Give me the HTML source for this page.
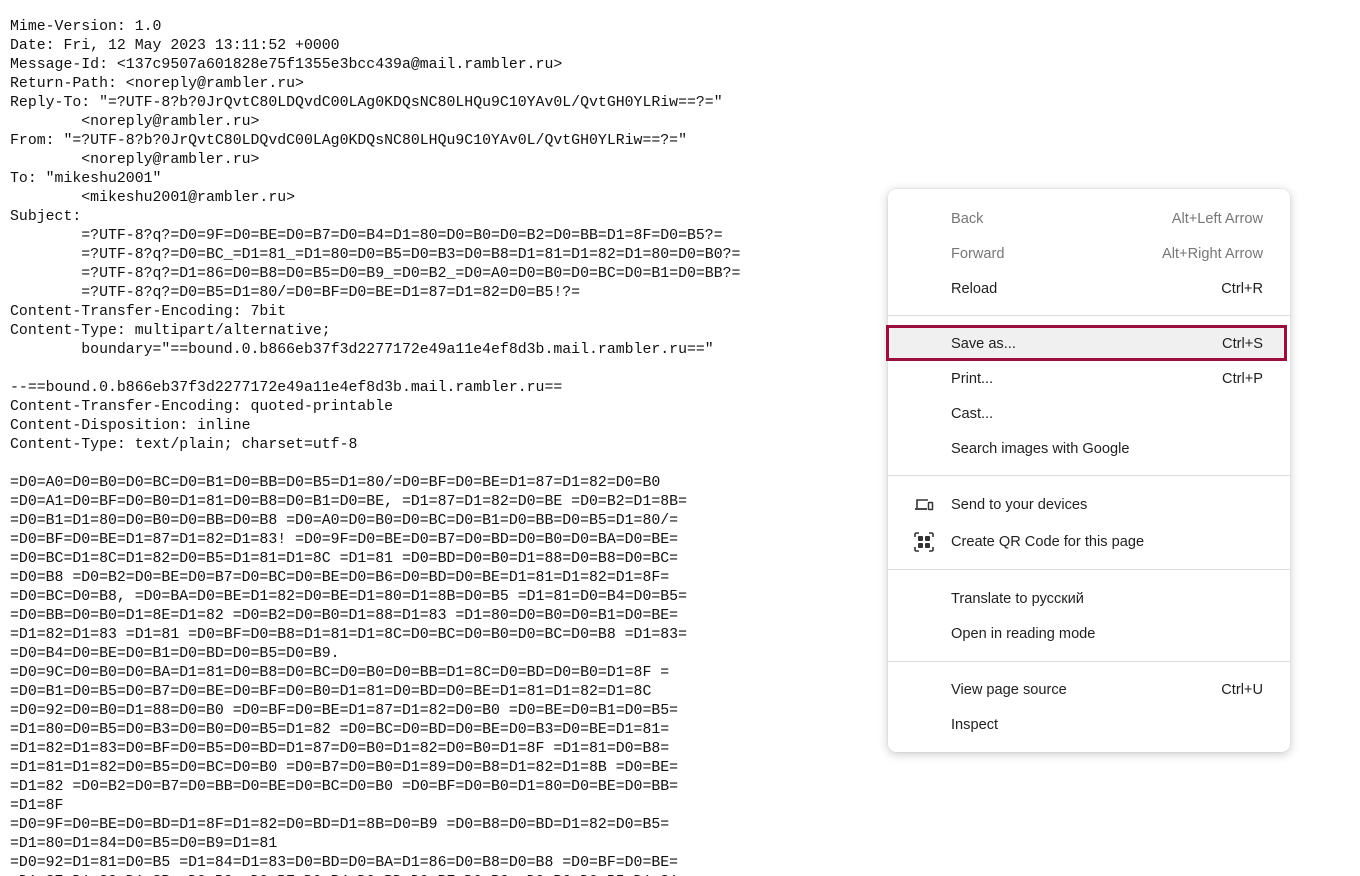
<!DOCTYPE html>
<html><head><meta charset="utf-8"><style>
html,body{margin:0;padding:0;background:#fff;width:1360px;height:876px;overflow:hidden;position:relative}
pre{margin:0;position:absolute;left:10px;top:18px;font-family:"Liberation Mono",monospace;font-size:14.85px;line-height:19px;color:#111;white-space:pre}
.menu{position:absolute;left:888px;top:189px;width:402px;height:563px;background:#fff;border-radius:8px;box-shadow:0 2px 10px rgba(0,0,0,.22),0 0 1px rgba(0,0,0,.2);font-family:"Liberation Sans",sans-serif;font-size:14.6px;color:#1f1f1f}
.it{position:absolute;left:0;width:402px;height:35px;line-height:35px;margin-top:2px}
.it .l{position:absolute;left:63px}
.it .r{position:absolute;right:27px}
.dis{color:#777}
.sep{position:absolute;left:0;width:402px;height:1px;background:#dcdcdc}
.hl{position:absolute;left:-2px;top:136px;width:395px;height:30px;background:#f0f0f0;border:3px solid #9b0f3d}
.ic{position:absolute;left:26px;top:9px}
</style></head><body>
<pre>Mime-Version: 1.0
Date: Fri, 12 May 2023 13:11:52 +0000
Message-Id: &lt;137c9507a601828e75f1355e3bcc439a@mail.rambler.ru&gt;
Return-Path: &lt;noreply@rambler.ru&gt;
Reply-To: "=?UTF-8?b?0JrQvtC80LDQvdC00LAg0KDQsNC80LHQu9C10YAv0L/QvtGH0YLRiw==?="
        &lt;noreply@rambler.ru&gt;
From: "=?UTF-8?b?0JrQvtC80LDQvdC00LAg0KDQsNC80LHQu9C10YAv0L/QvtGH0YLRiw==?="
        &lt;noreply@rambler.ru&gt;
To: "mikeshu2001"
        &lt;mikeshu2001@rambler.ru&gt;
Subject:
        =?UTF-8?q?=D0=9F=D0=BE=D0=B7=D0=B4=D1=80=D0=B0=D0=B2=D0=BB=D1=8F=D0=B5?=
        =?UTF-8?q?=D0=BC_=D1=81_=D1=80=D0=B5=D0=B3=D0=B8=D1=81=D1=82=D1=80=D0=B0?=
        =?UTF-8?q?=D1=86=D0=B8=D0=B5=D0=B9_=D0=B2_=D0=A0=D0=B0=D0=BC=D0=B1=D0=BB?=
        =?UTF-8?q?=D0=B5=D1=80/=D0=BF=D0=BE=D1=87=D1=82=D0=B5!?=
Content-Transfer-Encoding: 7bit
Content-Type: multipart/alternative;
        boundary="==bound.0.b866eb37f3d2277172e49a11e4ef8d3b.mail.rambler.ru=="

--==bound.0.b866eb37f3d2277172e49a11e4ef8d3b.mail.rambler.ru==
Content-Transfer-Encoding: quoted-printable
Content-Disposition: inline
Content-Type: text/plain; charset=utf-8

=D0=A0=D0=B0=D0=BC=D0=B1=D0=BB=D0=B5=D1=80/=D0=BF=D0=BE=D1=87=D1=82=D0=B0
=D0=A1=D0=BF=D0=B0=D1=81=D0=B8=D0=B1=D0=BE, =D1=87=D1=82=D0=BE =D0=B2=D1=8B=
=D0=B1=D1=80=D0=B0=D0=BB=D0=B8 =D0=A0=D0=B0=D0=BC=D0=B1=D0=BB=D0=B5=D1=80/=
=D0=BF=D0=BE=D1=87=D1=82=D1=83! =D0=9F=D0=BE=D0=B7=D0=BD=D0=B0=D0=BA=D0=BE=
=D0=BC=D1=8C=D1=82=D0=B5=D1=81=D1=8C =D1=81 =D0=BD=D0=B0=D1=88=D0=B8=D0=BC=
=D0=B8 =D0=B2=D0=BE=D0=B7=D0=BC=D0=BE=D0=B6=D0=BD=D0=BE=D1=81=D1=82=D1=8F=
=D0=BC=D0=B8, =D0=BA=D0=BE=D1=82=D0=BE=D1=80=D1=8B=D0=B5 =D1=81=D0=B4=D0=B5=
=D0=BB=D0=B0=D1=8E=D1=82 =D0=B2=D0=B0=D1=88=D1=83 =D1=80=D0=B0=D0=B1=D0=BE=
=D1=82=D1=83 =D1=81 =D0=BF=D0=B8=D1=81=D1=8C=D0=BC=D0=B0=D0=BC=D0=B8 =D1=83=
=D0=B4=D0=BE=D0=B1=D0=BD=D0=B5=D0=B9.
=D0=9C=D0=B0=D0=BA=D1=81=D0=B8=D0=BC=D0=B0=D0=BB=D1=8C=D0=BD=D0=B0=D1=8F =
=D0=B1=D0=B5=D0=B7=D0=BE=D0=BF=D0=B0=D1=81=D0=BD=D0=BE=D1=81=D1=82=D1=8C
=D0=92=D0=B0=D1=88=D0=B0 =D0=BF=D0=BE=D1=87=D1=82=D0=B0 =D0=BE=D0=B1=D0=B5=
=D1=80=D0=B5=D0=B3=D0=B0=D0=B5=D1=82 =D0=BC=D0=BD=D0=BE=D0=B3=D0=BE=D1=81=
=D1=82=D1=83=D0=BF=D0=B5=D0=BD=D1=87=D0=B0=D1=82=D0=B0=D1=8F =D1=81=D0=B8=
=D1=81=D1=82=D0=B5=D0=BC=D0=B0 =D0=B7=D0=B0=D1=89=D0=B8=D1=82=D1=8B =D0=BE=
=D1=82 =D0=B2=D0=B7=D0=BB=D0=BE=D0=BC=D0=B0 =D0=BF=D0=B0=D1=80=D0=BE=D0=BB=
=D1=8F
=D0=9F=D0=BE=D0=BD=D1=8F=D1=82=D0=BD=D1=8B=D0=B9 =D0=B8=D0=BD=D1=82=D0=B5=
=D1=80=D1=84=D0=B5=D0=B9=D1=81
=D0=92=D1=81=D0=B5 =D1=84=D1=83=D0=BD=D0=BA=D1=86=D0=B8=D0=B8 =D0=BF=D0=BE=
=D1=87=D1=82=D1=8B =D0=B2 =D0=BE=D0=B4=D0=BD=D0=BE=D0=BC =D0=BC=D0=B5=D1=81=</pre>
<div class="menu">
<div class="it dis" style="top:11px"><span class="l">Back</span><span class="r">Alt+Left Arrow</span></div>
<div class="it dis" style="top:46px"><span class="l">Forward</span><span class="r">Alt+Right Arrow</span></div>
<div class="it" style="top:81px"><span class="l">Reload</span><span class="r">Ctrl+R</span></div>
<div class="sep" style="top:126px"></div>
<div class="hl"></div>
<div class="it" style="top:136px"><span class="l">Save as...</span><span class="r">Ctrl+S</span></div>
<div class="it" style="top:171px"><span class="l">Print...</span><span class="r">Ctrl+P</span></div>
<div class="it" style="top:206px"><span class="l">Cast...</span></div>
<div class="it" style="top:241px"><span class="l">Search images with Google</span></div>
<div class="sep" style="top:286px"></div>
<div class="it" style="top:297px"><svg class="ic" width="20" height="16" viewBox="0 0 20 16"><path d="M3 11V3h11" fill="none" stroke="#333" stroke-width="1.6"/><path d="M1 12h12" stroke="#333" stroke-width="1.8"/><rect x="14.5" y="5.5" width="4" height="7" rx="0.5" fill="none" stroke="#333" stroke-width="1.5"/></svg><span class="l">Send to your devices</span></div>
<div class="it" style="top:334px"><svg class="ic" width="20" height="20" viewBox="0 0 20 20" style="top:7px"><path d="M1 5V2.5Q1 1 2.5 1H5M15 1h2.5Q19 1 19 2.5V5M19 15v2.5q0 1.5-1.5 1.5H15M5 19H2.5Q1 19 1 17.5V15" fill="none" stroke="#333" stroke-width="1.6"/><rect x="4" y="4" width="5" height="5" rx="1" fill="#333"/><rect x="11" y="4" width="5" height="5" rx="1" fill="#333"/><rect x="4" y="11" width="5" height="5" rx="1" fill="#333"/><rect x="11" y="11" width="5" height="5" rx="1" fill="#333"/></svg><span class="l">Create QR Code for this page</span></div>
<div class="sep" style="top:380px"></div>
<div class="it" style="top:391px"><span class="l">Translate to русский</span></div>
<div class="it" style="top:426px"><span class="l">Open in reading mode</span></div>
<div class="sep" style="top:472px"></div>
<div class="it" style="top:482px"><span class="l">View page source</span><span class="r">Ctrl+U</span></div>
<div class="it" style="top:517px"><span class="l">Inspect</span></div>
</div>
</body></html>
